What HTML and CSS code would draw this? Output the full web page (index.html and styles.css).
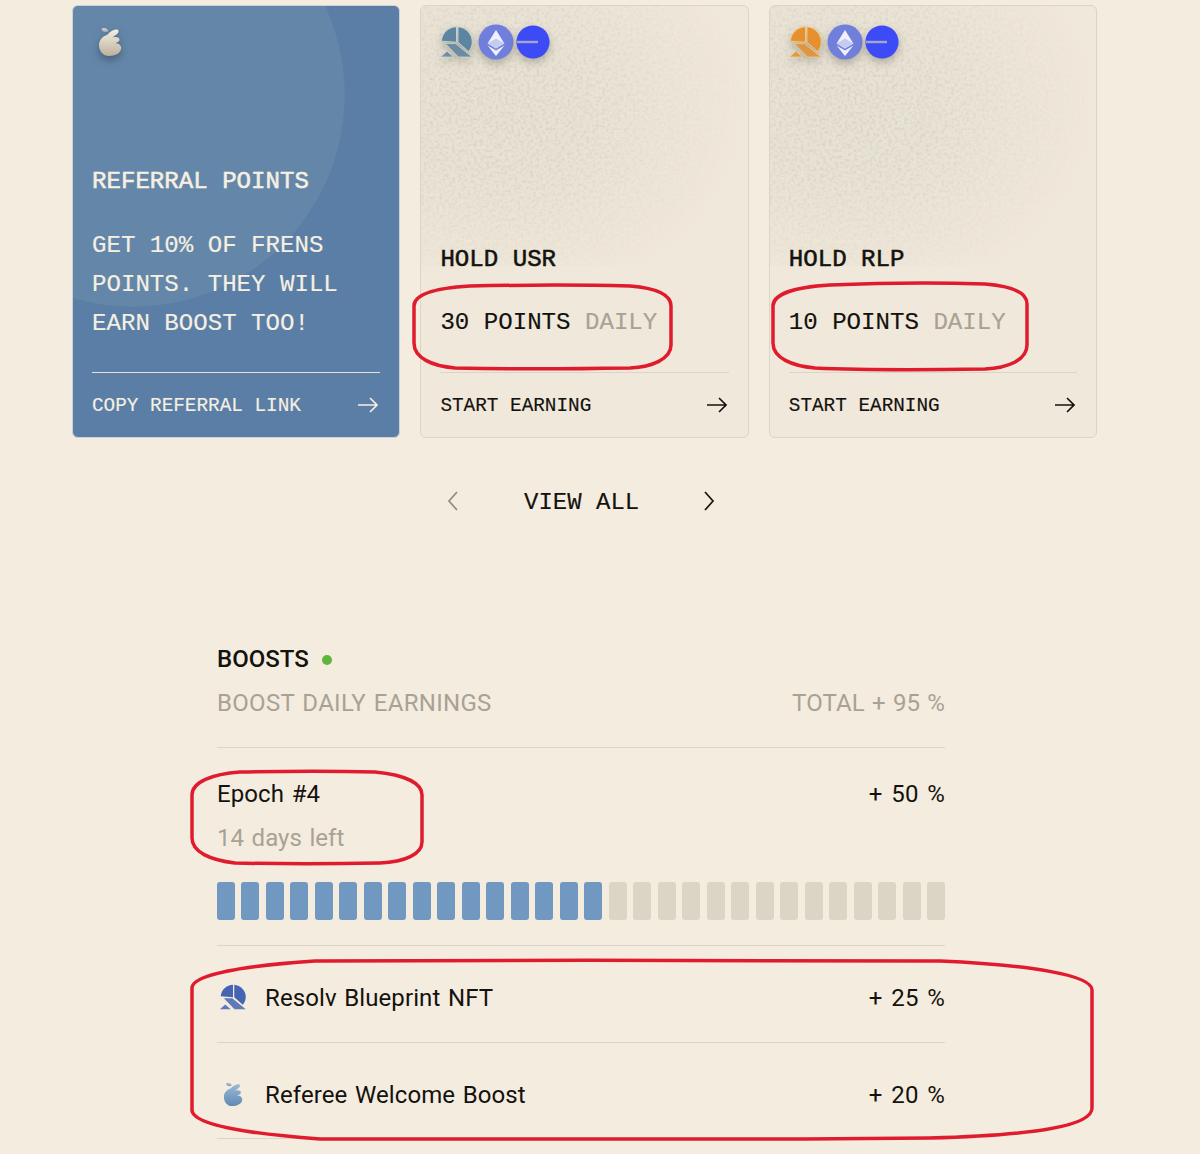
FILE: index.html
```html
<!DOCTYPE html>
<html lang="en">
<head>
<meta charset="utf-8">
<title>Resolv Points</title>
<link rel="stylesheet" href="styles.css">
</head>
<body>
<svg class="defs" width="0" height="0" aria-hidden="true">
  <defs>
    <linearGradient id="cream" x1="0" y1="0" x2="0" y2="1"><stop offset="0" stop-color="#f3eee2"/><stop offset="1" stop-color="#bdb19c"/></linearGradient>
    <linearGradient id="sky" x1="0" y1="0" x2="0" y2="1"><stop offset="0" stop-color="#9bbad6"/><stop offset="1" stop-color="#5f8ab4"/></linearGradient>
    <filter id="grain" x="0" y="0" width="100%" height="100%">
      <feTurbulence type="fractalNoise" baseFrequency="0.32" numOctaves="3" seed="7"/>
      <feColorMatrix values="0 0 0 0 0.62  0 0 0 0 0.60  0 0 0 0 0.52  0 0 0 2.4 -1.05"/>
    </filter>
    <radialGradient id="fade" cx="0.22" cy="0.38" r="0.78"><stop offset="0" stop-color="#ccc"/><stop offset="0.4" stop-color="#999"/><stop offset="0.7" stop-color="#444"/><stop offset="0.9" stop-color="#111"/><stop offset="1" stop-color="#000"/></radialGradient>
    <mask id="grainMask"><rect width="328" height="260" fill="url(#fade)"/></mask>
    <symbol id="wing" viewBox="0 0 24 29">
      <path d="M3.5 2C5 0 9.5 1 10.5 4 8 6 4 5 3.5 2Z" opacity=".8"/>
      <path d="M1 18C1 13 5 9 9 8 13 3 20 1 20.5 4 20.8 7 16 9 14.5 10.5 18 9.5 21.5 10 21.5 12.8 21.5 15 18 16 16.5 16.4 20 15.5 23.2 18 23.2 21 23.2 26 17 29 11 29 5 29 1 24 1 18Z"/>
    </symbol>
    <symbol id="resolv" viewBox="0 0 33 32">
      <path d="M16.5 .8V16.2L1.4 15.2C2 7 8.4 1 16.5 .8Z"/>
      <path d="M18 .8C26 1.4 32.2 8 32.2 15.8 32.2 19.8 30.8 23 28.6 25.6L18 16.2Z"/>
      <path d="M5.2 17.6H15.6L32.2 31H18.4Z" opacity=".85"/>
      <path d="M.4 31 7 25.2 13.6 31Z" opacity=".85"/>
    </symbol>
    <symbol id="trio" viewBox="0 0 36 36">
      <circle cx="18" cy="18" r="17.5" fill="#717fdc"/>
      <path d="M18 6 9.6 19.6 18 24.4 26.4 19.6Z" fill="#f1f1fb"/>
      <path d="M18 14.6 9.6 19.6 18 24.4 26.4 19.6Z" fill="#c6cbf1"/>
      <path d="M9.6 21.6 18 32 26.4 21.6 18 26.4Z" fill="#f1f1fb"/>
    </symbol>
    <symbol id="usr" viewBox="0 0 36 36">
      <circle cx="18" cy="18" r="16.6" fill="#3d4bf6"/>
      <rect x="2" y="16.8" width="21" height="2.4" fill="#a5a5c6"/>
    </symbol>
  </defs>
</svg>

<main class="page">
  <section class="cards">
    <article class="card card-blue">
      <svg class="wing-cream" width="24" height="29"><use href="#wing"/></svg>
      <h2 class="card-title">REFERRAL POINTS</h2>
      <p class="card-text">GET 10% OF FRENS<br>POINTS. THEY WILL<br>EARN BOOST TOO!</p>
      <a class="card-foot foot-light">COPY REFERRAL LINK
        <svg class="arrow" width="20" height="16" viewBox="0 0 20 16"><path d="M0 8H19M12 1l7 7-7 7"/></svg>
      </a>
    </article>

    <article class="card card-sand">
      <svg class="grain" width="328" height="260"><rect class="haze" width="328" height="260" mask="url(#grainMask)"/><rect width="328" height="260" filter="url(#grain)" mask="url(#grainMask)"/></svg>
      <div class="tokens">
        <svg class="logo logo-slate" width="33" height="32"><use href="#resolv"/></svg>
        <svg class="coin" width="36" height="36"><use href="#trio"/></svg>
        <svg class="coin coin-usr" width="36" height="36"><use href="#usr"/></svg>
      </div>
      <h2 class="card-title">HOLD USR</h2>
      <p class="card-text">30 POINTS <span class="dim">DAILY</span></p>
      <a class="card-foot">START EARNING
        <svg class="arrow" width="20" height="16" viewBox="0 0 20 16"><path d="M0 8H19M12 1l7 7-7 7"/></svg>
      </a>
    </article>

    <article class="card card-sand">
      <svg class="grain" width="328" height="260"><rect class="haze" width="328" height="260" mask="url(#grainMask)"/><rect width="328" height="260" filter="url(#grain)" mask="url(#grainMask)"/></svg>
      <div class="tokens">
        <svg class="logo logo-amber" width="33" height="32"><use href="#resolv"/></svg>
        <svg class="coin" width="36" height="36"><use href="#trio"/></svg>
        <svg class="coin coin-usr" width="36" height="36"><use href="#usr"/></svg>
      </div>
      <h2 class="card-title">HOLD RLP</h2>
      <p class="card-text">10 POINTS <span class="dim">DAILY</span></p>
      <a class="card-foot">START EARNING
        <svg class="arrow" width="20" height="16" viewBox="0 0 20 16"><path d="M0 8H19M12 1l7 7-7 7"/></svg>
      </a>
    </article>
  </section>

  <nav class="pager">
    <svg class="chev chev-off" width="12" height="20" viewBox="0 0 12 20"><path d="M10 1 2 10l8 9"/></svg>
    <span class="pager-label">VIEW ALL</span>
    <svg class="chev" width="12" height="20" viewBox="0 0 12 20"><path d="M2 1l8 9-8 9"/></svg>
  </nav>

  <section class="boosts">
    <header class="boost-head">
      <h2 class="boost-title">BOOSTS <span class="dot"></span></h2>
      <div class="spread dim-row"><span>BOOST DAILY EARNINGS</span><span class="total">TOTAL + 95 %</span></div>
    </header>

    <div class="epoch">
      <div class="spread"><span>Epoch #4</span><span class="pct">+ 50 %</span></div>
      <div class="dim-row epoch-left">14 days left</div>
      <div class="bars">
        <i class="on"></i><i class="on"></i><i class="on"></i><i class="on"></i><i class="on"></i><i class="on"></i><i class="on"></i><i class="on"></i>
        <i class="on"></i><i class="on"></i><i class="on"></i><i class="on"></i><i class="on"></i><i class="on"></i><i class="on"></i><i class="on"></i>
        <i></i><i></i><i></i><i></i><i></i><i></i><i></i><i></i><i></i><i></i><i></i><i></i><i></i><i></i>
      </div>
    </div>

    <div class="boost-row spread">
      <span class="boost-name">
        <svg class="logo logo-blue" width="32" height="26"><use href="#resolv"/></svg>
        Resolv Blueprint NFT
      </span>
      <span class="pct">+ 25 %</span>
    </div>
    <div class="boost-row boost-last spread">
      <span class="boost-name">
        <svg class="wing-sky" width="32" height="24"><use href="#wing"/></svg>
        Referee Welcome Boost
      </span>
      <span class="pct">+ 20 %</span>
    </div>
  </section>
</main>

<svg class="marks" width="1200" height="1154" viewBox="0 0 1200 1154" aria-hidden="true">
  <path d="M470 286C520 285 590 285 630 286 655 288 671 294 671 306V345C671 359 652 367 630 368 570 369 500 369 455 368 432 366 414 358 414 343V306C414 294 436 288 470 286Z"/>
  <path d="M830 285C880 283 950 283 985 284 1010 286 1027 292 1027 304V345C1027 360 1008 368 985 369 920 370 860 370 815 368 792 366 773 358 773 343V306C773 294 795 287 830 285Z"/>
  <path d="M240 772C290 771 340 771 375 772 405 775 422 783 422 795V842C422 854 405 862 380 863 330 864 280 864 235 863 210 860 192 852 192 838V795C192 782 212 774 240 772Z"/>
  <path d="M315 961C500 960 800 960 940 961 1030 965 1092 975 1092 990V1108C1092 1125 1040 1135 930 1138 720 1140 500 1140 320 1139 250 1134 192 1125 192 1110V988C192 975 240 966 315 961Z"/>
</svg>
</body>
</html>
```
FILE: styles.css
```css
* { box-sizing: border-box; }
html, body { margin: 0; height: 1154px; overflow: hidden; }
body {
  position: relative;
  background: #f4ecdf;
  color: #14120e;
  font-family: "Roboto", "Liberation Sans", sans-serif;
  font-size: 24px;
  line-height: 39px;
  letter-spacing: .1px;
  word-spacing: 1.5px;
}
.defs { position: absolute; }
.page { padding-top: 5px; }

.cards { display: flex; gap: 20px; padding-left: 72px; }
.card {
  position: relative;
  flex: 0 0 328.4px;
  height: 433px;
  display: flex;
  flex-direction: column;
  padding: 0 19px;
  border-radius: 6px;
  overflow: hidden;
  font-family: "Liberation Mono", monospace;
  font-size: 24.1px;
  letter-spacing: 0;
  word-spacing: 0;
}
.card-blue {
  background: radial-gradient(circle 212px at 60px 89px, #6487a9 99.6%, transparent 100%), #5a7ea5;
  border: 1px solid #cfd2d2;
  color: #f6efe2;
}
.card-sand {
  background: #f0e8da;
  border: 1px solid #dcd5c6;
}
.grain { position: absolute; left: 0; top: 0; }
.haze { fill: #d9d6c8; opacity: .45; }
.card-title { margin: auto 0 24px; font: inherit; font-weight: 400; position: relative; -webkit-text-stroke: .55px currentColor; }
.card-blue .card-title { margin-bottom: 25px; }
.card-text { margin: 0 0 30px; position: relative; -webkit-text-stroke: .15px currentColor; }
.card-blue .card-text { margin-bottom: 29px; }
.dim { color: #a8a295; }
.card-foot {
  position: relative;
  height: 65px;
  flex: none;
  display: flex;
  align-items: center;
  justify-content: space-between;
  padding: 3px 2px 0 0;
  border-top: 1px solid #dcd5c6;
  font-size: 19.35px;
  -webkit-text-stroke: .15px currentColor;
}
.foot-light { border-top-color: #e6e1d6; }
.arrow { fill: none; stroke: currentColor; stroke-width: 1.6; margin-top: -3px; }

.wing-cream { position: absolute; left: 25px; top: 21px; fill: url(#cream); filter: drop-shadow(0 4px 4px rgba(30, 45, 65, .45)); }
.wing-sky { fill: url(#sky); margin-bottom: 4px; }
.tokens { position: absolute; left: 19px; top: 18px; display: flex; align-items: center; }
.logo { fill: currentColor; }
.logo-slate { color: #5d84a0; stroke: #cfdbd9; stroke-width: .8px; filter: drop-shadow(0 4px 4px rgba(70, 70, 60, .35)); }
.logo-amber { color: #e5912f; stroke: #f6cf8c; stroke-width: .8px; filter: drop-shadow(0 4px 4px rgba(70, 70, 60, .35)); }
.logo-blue { color: #4465b4; margin-bottom: 4px; }
.coin { margin-left: 5px; filter: drop-shadow(0 4px 4px rgba(70, 70, 60, .35)); }
.coin-usr { margin-left: 1px; }

.pager {
  margin-top: 43px;
  height: 39px;
  padding-left: 447px;
  display: flex;
  align-items: center;
  font-family: "Liberation Mono", monospace;
  letter-spacing: 0;
  word-spacing: 0;
}
.pager-label { width: 114px; margin: 4px 65px 0; white-space: nowrap; -webkit-text-stroke: .15px currentColor; }
.chev { fill: none; stroke: currentColor; stroke-width: 1.7; }
.chev-off { stroke: #8f8b80; }

.boosts { width: 728px; margin: 120px 0 0 217px; }
.spread { display: flex; justify-content: space-between; align-items: center; }
.boost-title { margin: 0 0 5px; font: inherit; font-weight: 500; letter-spacing: 0; display: flex; align-items: center; gap: 13px; }
.dot { width: 10px; height: 10px; border-radius: 50%; background: #5db53d; }
.dim-row { color: #a8a295; letter-spacing: .3px; }
.total { letter-spacing: .15px; word-spacing: 1px; }
.pct { letter-spacing: .2px; word-spacing: 2.5px; }
.boost-head { padding-bottom: 24px; border-bottom: 1px solid #dcd5c7; }

.epoch { padding-top: 27px; padding-bottom: 25px; border-bottom: 1px solid #dcd5c7; }
.epoch-left { margin-top: 5px; letter-spacing: .05px; }
.bars { display: grid; grid-template-columns: repeat(30, 1fr); gap: 6.5px; margin-top: 24px; }
.bars i { height: 38px; border-radius: 3px; background: #dcd5c5; }
.bars i.on { background: #7098c0; }

.boost-row { padding: 33px 0 24px; border-bottom: 1px solid #dcd5c7; }
.boost-last { padding-bottom: 23px; }
.boost-name { display: flex; align-items: center; gap: 16px; }

.marks { position: absolute; left: 0; top: 0; fill: none; stroke: #e01b2e; stroke-width: 3.5; }
```
